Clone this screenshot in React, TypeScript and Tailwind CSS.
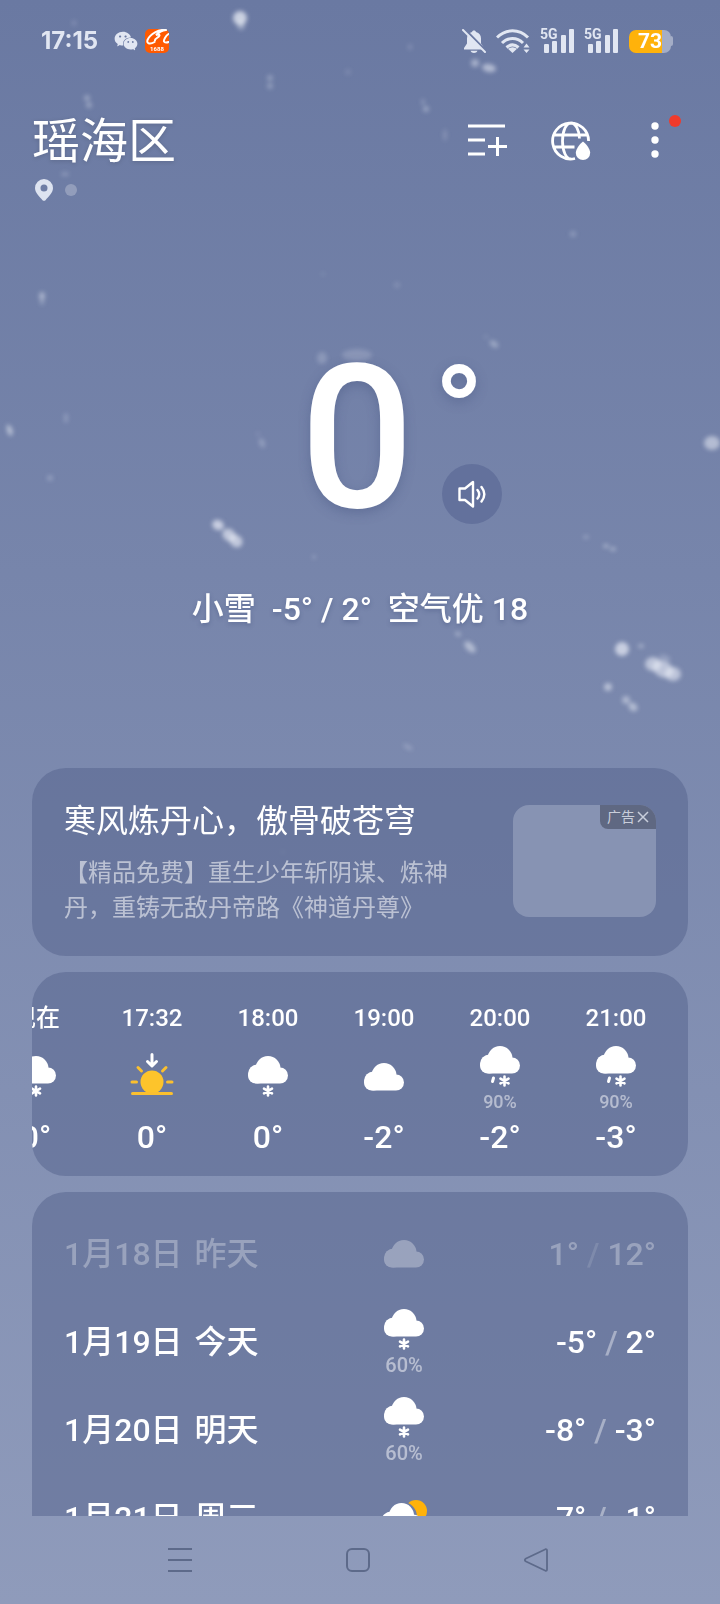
import React from "react";
import { AiFillWechat } from "react-icons/ai";

type IconName = "cloud" | "snow" | "sleet" | "sunset" | "partly";

const hours: { time: string; icon: IconName; chance?: string; temp: string }[] = [
    { time: "现在", icon: "snow", temp: "0°" },
    { time: "17:32", icon: "sunset", temp: "0°" },
    { time: "18:00", icon: "snow", temp: "0°" },
    { time: "19:00", icon: "cloud", temp: "-2°" },
    { time: "20:00", icon: "sleet", chance: "90%", temp: "-2°" },
    { time: "21:00", icon: "sleet", chance: "90%", temp: "-3°" },
];

const days: { date: string; label: string; icon: IconName; chance?: string; low: string; high: string; past?: boolean }[] = [
    { date: "1月18日", label: "昨天", icon: "cloud", low: "1°", high: "12°", past: true },
    { date: "1月19日", label: "今天", icon: "snow", chance: "60%", low: "-5°", high: "2°" },
    { date: "1月20日", label: "明天", icon: "snow", chance: "60%", low: "-8°", high: "-3°" },
    { date: "1月21日", label: "周三", icon: "partly", low: "-7°", high: "-1°" },
];

// x, y, rx, ry, rotation, opacity
const flakes = [
    [240, 18, 7, 7, 0, 0.75], [241, 25, 4, 5, 0, 0.4], [74, 23, 2, 3, 0, 0.2], [270, 78, 3, 3, 0, 0.3],
    [270, 86, 3, 3, 0, 0.3], [87, 98, 3, 3, 0, 0.35], [89, 105, 3, 3, 0, 0.35], [65, 174, 4, 2, 0, 0.25],
    [348, 72, 3, 3, 0, 0.12], [410, 47, 2, 3, 0, 0.2], [475, 63, 4, 4, 0, 0.45], [489, 68, 7, 4, 10, 0.55],
    [423, 102, 2, 3, 0, 0.25], [426, 109, 3, 3, 0, 0.35], [445, 135, 2, 6, 0, 0.2], [573, 234, 3, 3, 0, 0.25],
    [42, 296, 3, 4, 0, 0.45], [42, 302, 2, 3, 0, 0.3], [10, 431, 3, 5, -10, 0.5], [8, 427, 2, 3, 0, 0.3],
    [66, 418, 2, 5, 0, 0.25], [50, 478, 3, 3, 0, 0.25], [262, 443, 3, 5, -20, 0.25], [258, 434, 2, 2, 0, 0.15],
    [712, 443, 8, 7, 0, 0.55], [322, 358, 5, 6, 0, 0.22], [357, 355, 15, 6, 0, 0.2], [494, 344, 5, 3, 35, 0.35],
    [486, 337, 2, 2, 0, 0.15], [218, 525, 6, 5, 25, 0.7], [229, 535, 7, 6, 40, 0.65], [236, 541, 7, 6, 40, 0.65],
    [314, 557, 2, 2, 0, 0.25], [586, 537, 3, 2, 0, 0.25], [606, 546, 3, 2, 0, 0.4], [613, 549, 3, 2, 0, 0.4],
    [458, 634, 3, 2, 20, 0.4], [470, 647, 7, 4, 45, 0.5], [622, 649, 7, 7, 0, 0.7], [641, 646, 3, 2, 0, 0.4],
    [653, 664, 8, 7, 0, 0.6], [663, 669, 11, 8, 27, 0.6], [673, 674, 8, 7, 0, 0.6], [665, 658, 6, 3, 20, 0.25],
    [608, 687, 4, 4, 0, 0.55], [626, 700, 4, 4, 0, 0.45], [633, 707, 5, 4, 42, 0.5], [408, 747, 5, 2, 30, 0.25],
    [323, 274, 2, 2, 0, 0.12], [397, 285, 3, 3, 0, 0.15], [283, 852, 2, 2, 0, 0.1],
];

const Snow = () => (
    <svg
        className="absolute inset-0 h-full w-full pointer-events-none"
        viewBox="0 0 720 1604"
        preserveAspectRatio="xMidYMin slice"
        aria-hidden="true"
    >
        <defs>
            <filter id="soft" x="-50%" y="-50%" width="200%" height="200%">
                <feGaussianBlur stdDeviation="2" />
            </filter>
        </defs>
        <g fill="#e9edf6" filter="url(#soft)">
            {flakes.map(([x, y, rx, ry, angle, opacity], i) => (
                <ellipse key={i} cx={x} cy={y} rx={rx} ry={ry} opacity={opacity} transform={`rotate(${angle} ${x} ${y})`} />
            ))}
        </g>
    </svg>
);

const Flake = ({ x, y }: { x: number; y: number }) => (
    <path
        d="M0-4.500V4.500M-4-2.300 4 2.300M4-2.300-4 2.300"
        transform={`translate(${x} ${y})`}
        stroke="currentColor"
        strokeWidth="2.600"
        strokeLinecap="round"
    />
);

const Cloud = () => (
    <g fill="currentColor">
        <circle cx="20" cy="12.5" r="12.5" />
        <rect x="0" y="11.5" width="40" height="16" rx="8" />
        <circle cx="9.5" cy="18" r="9.5" />
    </g>
);

const WeatherIcon = ({ name }: { name: IconName }) => {
    if (name === "sunset") {
        return (
            <svg className="mb-1" width="44" height="43" viewBox="0 0 44 43" fill="none" strokeLinecap="round">
                <path d="M22 1.500V12M17.500 8.500 22 13l4.500-4.500" stroke="#fff" strokeWidth="3" strokeLinejoin="round" />
                <circle cx="22" cy="29" r="11.500" fill="#fdc42b" />
                <path d="M2.500 40.500h39M2 29h4.500M37.500 29H42M8 14.500l3.500 3.500M36 14.500 32.500 18" stroke="#fbc02f" strokeWidth="3" />
            </svg>
        );
    }
    if (name === "partly") {
        return (
            <svg width="48" height="36" viewBox="0 0 48 36" fill="none">
                <circle cx="36" cy="11" r="11" fill="#ffb20a" />
                <circle cx="21.5" cy="17" r="15.500" fill="#6f7da4" />
                <g transform="translate(1.500 3)">
                    <Cloud />
                </g>
            </svg>
        );
    }
    return (
        <svg width="40" height={name === "cloud" ? 28 : 42} viewBox={name === "cloud" ? "0 0 40 28" : "0 0 40 42"} fill="none">
            <Cloud />
            {name === "snow" && <Flake x={20} y={35} />}
            {name === "sleet" && (
                <>
                    <path d="M13.500 32 12.500 35.500" stroke="currentColor" strokeWidth="3" strokeLinecap="round" />
                    <Flake x={24.5} y={35} />
                </>
            )}
        </svg>
    );
};

const Signal = () => (
    <div className="relative h-6 w-[34px]">
        <span className="absolute left-0 -top-px font-['Roboto'] text-[14px] leading-3 font-bold">5G</span>
        <svg width="34" height="24" viewBox="0 0 34 24" fill="currentColor">
            <rect x="4" y="15" width="5" height="9" rx="1" />
            <rect x="12" y="12" width="5" height="12" rx="1" />
            <rect x="21" y="6" width="5" height="18" rx="1" />
            <rect x="29" y="0" width="5" height="24" rx="1" />
        </svg>
    </div>
);

const StatusBar = () => (
    <div className="flex h-[82px] items-center justify-between pl-[41px] pr-[47px] text-[#e1e6f2]">
        <div className="flex items-center">
            <span className="font-['Inter'] text-[24px] font-bold">17:15</span>
            <AiFillWechat className="ml-[15px] size-[26px]" />
            <svg className="ml-1.5" width="24" height="24" viewBox="0 0 24 24">
                <rect width="24" height="24" rx="5" fill="#ff5a00" />
                <path
                    d="M21 1C14 0 5 5 2.500 11c-1.200 4 3 4.500 7 2M21 1c-4 .5-7 2-10 5 2-.7 3.500-.7 3.500.5C14 8.500 9 10 10 11.500M23.500 5c-3 2-5 6-4.500 7.500.5 1.500 3.500 1 4.500.5"
                    fill="none"
                    stroke="#fff"
                    strokeWidth="2"
                    strokeLinecap="round"
                />
                <text x="12" y="22" textAnchor="middle" fill="#fff" fontSize="6" fontWeight="700" fontFamily="Roboto, sans-serif">1688</text>
            </svg>
        </div>
        <div className="flex items-center">
            <svg width="24" height="24" viewBox="0 0 24 24" fill="currentColor">
                <path d="M12 1.500c-1.200 0-1.800.6-2 1.600C6.500 4 5 6.500 5 9.500v5L2 19v1.500h20V19l-3-4.500v-5C19 6.500 17.500 4 14 3.100c-.2-1-.8-1.600-2-1.600zM8.500 21.800h7c-.6 1.500-2 2.200-3.500 2.200s-2.900-.7-3.500-2.200z" />
                <path d="M2.500 0 24 22" stroke="#6c7aa3" strokeWidth="2.400" />
                <path d="M1 1 23 23" stroke="currentColor" strokeWidth="2" strokeLinecap="round" />
            </svg>
            <svg className="ml-2.5" width="34" height="24" viewBox="0 0 34 24" fill="none" stroke="currentColor" strokeWidth="3">
                <path d="M1 8.500C10-.5 23-.5 32 8.500M6 14c6-6 15-6 21 0M10.500 18.500c4-3.500 8-3.500 12 0" />
                <path d="M16.500 24 12 19.800c3-2.200 6-2.200 9 0z" fill="currentColor" stroke="none" />
                <path d="M27.500 18.500h6l-3-4zM27.500 20.500h6l-3 3.500z" fill="currentColor" stroke="none" />
            </svg>
            <div className="ml-2.5 flex gap-2.5">
                <Signal />
                <Signal />
            </div>
            <div className="ml-[11px] flex items-center">
                <div className="flex h-[23px] w-[42px] items-center justify-center rounded-[7px] bg-linear-to-r from-[#ffb20a] from-78% to-[#a4adc6] to-78% font-['Roboto'] text-[21px] leading-none font-bold text-white">
                    73
                </div>
                <div className="h-2.5 w-0.5 rounded-r-sm bg-[#a4adc6]" />
            </div>
        </div>
    </div>
);

const Header = () => (
    <header className="px-8 pt-8">
        <div className="flex h-14 items-center justify-between">
            <h1 className="text-[48px] leading-none drop-shadow-sm">瑶海区</h1>
            <div className="flex items-center gap-[42px] pr-[11px] pb-0.5">
                <button type="button" aria-label="城市管理">
                    <svg width="42" height="40" viewBox="0 0 42 40" fill="none" stroke="currentColor" strokeWidth="3">
                        <path d="M1 5h37M1 19h17M1 33h17M21 25.500h19M30.500 16v19" />
                    </svg>
                </button>
                <button type="button" aria-label="天气地图">
                    <svg width="40" height="40" viewBox="0 0 40 40" fill="none" stroke="currentColor" strokeWidth="2.800">
                        <path d="M24 37.500A18 18 0 1 1 37.600 20M20 38c-5 0-8.500-8-8.500-18S15 2 20 2c4.500 0 8.300 7 8.500 15.500M3.500 14h33M3.500 26h20" />
                        <path d="M32 20.500c2 1.500 7.200 7 7.200 11.300a7.200 7.200 0 0 1-14.400 0c0-4.300 5.200-9.800 7.200-11.300z" fill="currentColor" stroke="none" />
                    </svg>
                </button>
                <button type="button" aria-label="更多" className="relative flex w-11 justify-center">
                    <svg width="8" height="40" viewBox="0 0 8 40" fill="currentColor">
                        <circle cx="4" cy="5" r="3.700" />
                        <circle cx="4" cy="19" r="3.700" />
                        <circle cx="4" cy="33" r="3.700" />
                    </svg>
                    <span className="absolute -top-1.5 -right-1 size-3 rounded-full bg-[#f03a2b]" />
                </button>
            </div>
        </div>
        <div className="mt-2.5 flex h-5 items-center gap-3 pl-[3px]">
            <svg width="18" height="22" viewBox="0 0 18 22" fill="#dde3f0">
                <path fillRule="evenodd" d="M9 0a9 9 0 0 1 9 9c0 5-4.500 8.500-7.500 12.200q-1.500 1.300-3 0C4.500 17.500 0 14 0 9a9 9 0 0 1 9-9zm0 5.500a3.500 3.500 0 1 0 0 7 3.500 3.500 0 0 0 0-7z" />
            </svg>
            <span className="size-3 rounded-full bg-white/25" />
        </div>
    </header>
);

const Current = () => (
    <section className="pt-[139px] text-center">
        <div className="grid grid-cols-[1fr_auto_1fr] pr-1.5">
            <div className="col-start-2 text-[200px] leading-[200px] font-medium text-shadow-[0_4px_12px_rgb(60_75_120/0.35)]">0</div>
            <div className="flex flex-col items-start pl-5">
                <span className="h-[125px] text-[132px] leading-[150px] font-medium text-shadow-[0_4px_12px_rgb(60_75_120/0.35)]">°</span>
                <button
                    type="button"
                    aria-label="语音播报"
                    className="ml-2 flex size-[60px] items-center justify-center rounded-full bg-[#63719c]"
                >
                    <svg width="28" height="28" viewBox="0 0 28 28" fill="none" stroke="currentColor" strokeWidth="2.400" strokeLinejoin="round" strokeLinecap="round">
                        <path d="M1.500 8.500H7L15 2v24.500L7 20H1.500zM19.500 10c2 2.500 2 6 0 8.500M23.500 7c3.500 4.500 3.500 10 0 14.500" />
                    </svg>
                </button>
            </div>
        </div>
        <p className="mt-[50px] mb-px text-[32px] leading-10 font-medium whitespace-pre text-shadow-[0_2px_4px_rgb(60_75_120/0.4)]">
            {"小雪  -5° / 2°  空气优 18"}
        </p>
    </section>
);

const Promo = () => (
    <section className="flex items-center justify-between rounded-[34px] bg-[#53628c]/50 px-8 pt-7 pb-[30px]">
        <div className="min-w-0 max-w-[400px]">
            <h2 className="text-[32px] leading-[50px]">寒风炼丹心，傲骨破苍穹</h2>
            <p className="mt-2.5 text-[24px] leading-[35px] text-white/55">【精品免费】重生少年斩阴谋、炼神丹，重铸无敌丹帝路《神道丹尊》</p>
        </div>
        <div className="flex h-28 w-[143px] flex-none justify-end overflow-hidden rounded-2xl bg-[#8793b3]">
            <button type="button" aria-label="关闭广告" className="flex h-6 w-14 items-center justify-center gap-0.5 rounded-bl-lg bg-[#5f6882] text-[14px] leading-none text-[#c9cedb]">
                广告
                <svg width="12" height="12" viewBox="0 0 12 12" stroke="currentColor" strokeWidth="1.500">
                    <path d="M1 1l10 10M11 1 1 11" />
                </svg>
            </button>
        </div>
    </section>
);

const Hourly = () => (
    <section className="overflow-hidden rounded-[34px] bg-[#53628c]/50">
        <ul className="-ml-[54px] flex pt-[30px] pb-[21px]">
            {hours.map((h) => (
                <li key={h.time} className="flex w-[116px] flex-none flex-col items-center font-medium">
                    <span className="text-[24px] leading-8">{h.time}</span>
                    <div className={`flex h-[85px] flex-col items-center justify-center ${h.chance ? "pt-1" : ""}`}>
                        <WeatherIcon name={h.icon} />
                        {h.chance && <span className="mt-1 text-[18px] leading-5 text-white/50">{h.chance}</span>}
                    </div>
                    <span className="text-[32px] leading-9">{h.temp}</span>
                </li>
            ))}
        </ul>
    </section>
);

const Daily = () => (
    <section className="rounded-t-[34px] bg-[#53628c]/50 px-8 pt-[18px]">
        <ul>
            {days.map((d) => (
                <li
                    key={d.date}
                    className={`grid h-[88px] grid-cols-[7fr_64px_5fr] items-center text-[32px] font-medium ${d.past ? "opacity-30" : ""}`}
                >
                    <div className="flex gap-3">
                        <span>{d.date}</span>
                        <span>{d.label}</span>
                    </div>
                    <div className="flex flex-col items-center">
                        <WeatherIcon name={d.icon} />
                        {d.chance && <span className="mt-1 text-[20px] leading-5 text-white/50">{d.chance}</span>}
                    </div>
                    <span className="text-right">
                        {d.low} <span className="text-white/40">/</span> {d.high}
                    </span>
                </li>
            ))}
        </ul>
    </section>
);

const NavBar = () => (
    <nav className="flex h-[88px] flex-none items-center justify-center pr-1 text-[#5d6a8a]">
        <button type="button" aria-label="最近任务" className="flex w-[178px] justify-center">
            <svg width="24" height="24" viewBox="0 0 24 24" stroke="currentColor" strokeWidth="2">
                <path d="M0 1h24M0 12h24M0 23h24" />
            </svg>
        </button>
        <button type="button" aria-label="主屏幕" className="flex w-[178px] justify-center">
            <svg width="24" height="24" viewBox="0 0 24 24" fill="none" stroke="currentColor" strokeWidth="2">
                <rect x="1" y="1" width="22" height="22" rx="5" />
            </svg>
        </button>
        <button type="button" aria-label="返回" className="flex w-[178px] justify-center">
            <svg width="24" height="24" viewBox="0 0 24 24" fill="none" stroke="currentColor" strokeWidth="1.800" strokeLinejoin="round">
                <path d="M21.500 1.200 1.500 10.800q-1.200 1.200 0 2.400l20 9.600q1.500.3 1.500-1.300v-19q0-1.600-1.500-1.300z" />
            </svg>
        </button>
    </nav>
);

const App = () => {
    return (
        <div className="relative flex h-screen flex-col overflow-hidden bg-linear-to-b from-[#6a79a2] to-[#8f9bbb] font-['Roboto','Noto_Sans_CJK_SC',sans-serif] text-white">
            <Snow />
            <main className="relative min-h-0 flex-1 overflow-hidden">
                <StatusBar />
                <Header />
                <Current />
                <div className="mt-[139px] flex flex-col gap-4 px-8">
                    <Promo />
                    <Hourly />
                    <Daily />
                </div>
            </main>
            <NavBar />
        </div>
    );
};

export default App;
